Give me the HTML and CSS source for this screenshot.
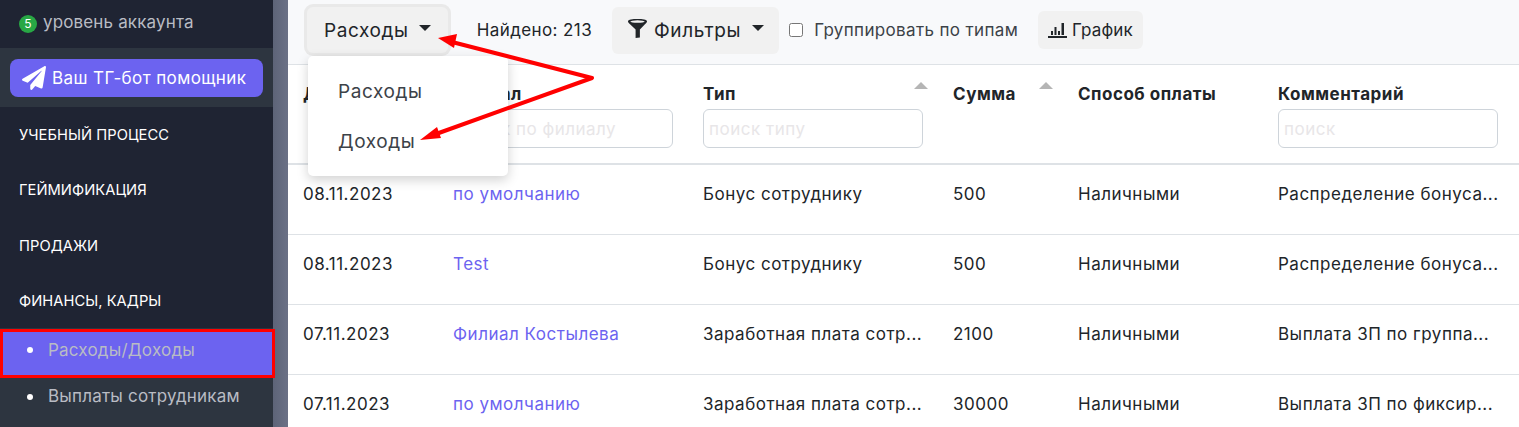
FILE: index.html
```html
<!DOCTYPE html>
<html lang="en">
<head>
    <meta charset="UTF-8">
    <meta name="viewport" content="width=device-width, initial-scale=1.0">
    <title>Расходы/Доходы</title>
    <link rel="stylesheet" href="styles.css">
</head>
<body>
    <div class="sidebar">
        <div class="level"><span class="level-badge">5</span> уровень аккаунта</div>
        <div class="bot-wrap">
            <a class="bot-button">
                <svg class="bot-icon" viewBox="0 0 512 512"><path fill="#fff" d="M476 3.2 12.5 270.6c-18.1 10.4-15.8 35.6 2.2 43.2L121 358.4l287.3-253.2c5.500-4.900 13.300 2.600 8.600 8.300L176 407v80.500c0 23.600 28.500 32.900 42.500 15.800L282 426l124.600 52.200c14.200 6 30.400-2.900 33-18.200l72-432C515 7.800 493.300-6.800 476 3.200z"/></svg>
                Ваш ТГ-бот помощник
            </a>
        </div>
        <ul class="menu">
            <li>Учебный процесс</li>
            <li>Геймификация</li>
            <li>Продажи</li>
            <li>Финансы, кадры</li>
        </ul>
        <ul class="submenu">
            <li class="active">Расходы/Доходы</li>
            <li>Выплаты сотрудникам</li>
        </ul>
    </div>
    <div class="scroll-strip"></div>

    <div class="main">
        <div class="toolbar">
            <button class="btn btn-focus">Расходы <span class="caret"></span></button>
            <span class="found">Найдено: 213</span>
            <button class="btn btn-filters">
                <svg class="funnel" viewBox="0 0 22 22"><path fill="#212529" d="M1 3.500C1 1.500 6 1 11 1s10 .5 10 2.500c0 1.200-1 2-2.200 3L13.500 12v8.500L9 21v-9L3.200 6.500C2 5.500 1 4.700 1 3.500z"/><ellipse cx="11" cy="3.700" rx="7.500" ry="1.300" fill="#f1f1f1"/></svg>
                Фильтры <span class="caret"></span>
            </button>
            <label class="group-check"><input type="checkbox"> Группировать по типам</label>
            <button class="btn btn-small">
                <svg class="chart" viewBox="0 0 19 15"><path fill="#212529" d="M0 13h19v2H0zM3 8h2v4H3zM6.500 4h2v8h-2zM10 8h2v4h-2zM13.500 0h2.500v12h-2.500z"/></svg>
                График
            </button>
        </div>

        <table class="data">
            <colgroup>
                <col class="c-date"><col class="c-branch"><col class="c-type">
                <col class="c-sum"><col class="c-pay"><col class="c-note">
            </colgroup>
            <thead>
                <tr>
                    <th>Дата</th>
                    <th>Филиал<input class="search" placeholder="поиск по филиалу"></th>
                    <th class="sortable">Тип<input class="search" placeholder="поиск типу"></th>
                    <th class="sortable">Сумма</th>
                    <th>Способ оплаты</th>
                    <th>Комментарий<input class="search" placeholder="поиск"></th>
                </tr>
            </thead>
            <tbody>
                <tr>
                    <td>08.11.2023</td><td><a>по умолчанию</a></td><td>Бонус сотруднику</td>
                    <td>500</td><td>Наличными</td><td>Распределение бонуса...</td>
                </tr>
                <tr>
                    <td>08.11.2023</td><td><a>Test</a></td><td>Бонус сотруднику</td>
                    <td>500</td><td>Наличными</td><td>Распределение бонуса...</td>
                </tr>
                <tr>
                    <td>07.11.2023</td><td><a>Филиал Костылева</a></td><td>Заработная плата сотр...</td>
                    <td>2100</td><td>Наличными</td><td>Выплата ЗП по группа...</td>
                </tr>
                <tr>
                    <td>07.11.2023</td><td><a>по умолчанию</a></td><td>Заработная плата сотр...</td>
                    <td>30000</td><td>Наличными</td><td>Выплата ЗП по фиксир...</td>
                </tr>
            </tbody>
        </table>

        <div class="dropdown">
            <div class="dropdown-item">Расходы</div>
            <div class="dropdown-item">Доходы</div>
        </div>
    </div>

    <!-- red annotation arrows drawn over the page -->
    <svg class="arrows" viewBox="0 0 1519 427">
        <path d="M452 42 592 78 436 134" fill="none" stroke="#f00" stroke-width="4" stroke-linejoin="round" stroke-linecap="round"/>
        <path fill="#f00" d="M438 38 457 34 454 48z"/>
        <path fill="#f00" d="M420 140 437 127 441 138z"/>
    </svg>
</body>
</html>
```

FILE: styles.css
```css
/* General */
* {
    box-sizing: border-box;
}

html, body {
    height: 100%;
}

body {
    margin: 0;
    display: flex;
    height: 427px;
    overflow: hidden;
    font-family: Inter, "Noto Sans", sans-serif;
    font-size: 17px;
    color: #212529;
    background-color: #fff;
}

/* Sidebar */
.sidebar {
    width: 273px;
    flex-shrink: 0;
    background-color: #1f2433;
    color: #fff;
}

.level {
    height: 48px;
    padding: 12px 0 0 19px;
    font-size: 17px;
    line-height: 20px;
    letter-spacing: 0.15px;
    color: #b9bcc4;
}

.level-badge {
    display: inline-block;
    width: 18px;
    height: 18px;
    margin-right: 1px;
    border-radius: 50%;
    background-color: #28a745;
    color: #fff;
    font-size: 12px;
    line-height: 18px;
    letter-spacing: 0;
    text-align: center;
    vertical-align: 0;
}

.bot-wrap {
    height: 59px;
    padding: 11px 10px 0;
    background-color: #2d3540;
}

.bot-button {
    display: flex;
    align-items: center;
    height: 38px;
    padding-left: 12px;
    border-radius: 8px;
    background-color: #6c63f0;
    color: #fff;
    font-size: 17px;
    letter-spacing: 0.4px;
}

.bot-icon {
    width: 24px;
    height: 24px;
    margin-right: 6px;
}

.menu {
    list-style: none;
    margin: 0;
    padding: 0;
}

.menu li {
    height: 55.3px;
    line-height: 57px;
    padding-left: 19px;
    font-size: 14.7px;
    letter-spacing: 0.05px;
    text-transform: uppercase;
}

.submenu {
    list-style: none;
    margin: 0;
    padding: 1px 0 0;
    background-color: #2d3540;
    height: 100px;
    color: #b9bcc4;
}

.submenu li {
    position: relative;
    height: 47px;
    line-height: 36px;
    padding-left: 48px;
    font-size: 17px;
    letter-spacing: 0.2px;
}

.submenu li::before {
    content: "";
    position: absolute;
    left: 27px;
    top: 16px;
    width: 6px;
    height: 6px;
    border-radius: 50%;
    background-color: #fff;
}

.submenu li.active {
    width: 275px;
    height: 49px;
    line-height: 36px;
    padding-left: 45px;
    border: 3px solid #f00;
    background-color: #6c63f0;
    z-index: 2;
}

.submenu li.active::before {
    left: 24px;
    top: 15px;
}

/* Grey scrollbar strip */
.scroll-strip {
    width: 15px;
    flex-shrink: 0;
    background: linear-gradient(to right, #5d6478, #6b7186);
}

/* Main area */
.main {
    position: relative;
    flex: 1;
    min-width: 0;
}

.toolbar {
    display: flex;
    align-items: center;
    height: 65px;
    padding: 0 0 4px 19px;
    background-color: #f8f9fb;
    border-bottom: 1px solid #dee2e6;
}

.btn {
    display: inline-flex;
    align-items: center;
    border: none;
    border-radius: 6px;
    background-color: #f1f1f1;
    color: #212529;
    font-family: inherit;
    font-size: 19px;
    letter-spacing: 0.6px;
}

.btn-focus {
    height: 46px;
    padding: 0 17px;
    box-shadow: 0 0 0 3px #e9e9e9;
}

.btn-focus .caret {
    margin-left: 10px;
}

.btn-filters {
    height: 47px;
    margin-left: 20px;
    padding: 0 15px;
}

.btn-small {
    height: 38px;
    margin-left: 20px;
    padding: 0 10px;
    font-size: 17px;
    letter-spacing: 0.1px;
}

.caret {
    display: inline-block;
    margin-left: 11px;
    margin-bottom: 4px;
    border-top: 6px solid #212529;
    border-left: 6px solid transparent;
    border-right: 6px solid transparent;
}

.found {
    margin-left: 29px;
    letter-spacing: 0.4px;
}

.funnel {
    width: 21px;
    height: 21px;
    margin-right: 6px;
    margin-bottom: 3px;
}

.chart {
    width: 19px;
    height: 15px;
    margin-right: 5px;
}

.group-check {
    display: flex;
    align-items: center;
    margin-left: 10px;
    letter-spacing: 0.35px;
    color: #3c4248;
}

.group-check input {
    width: 14px;
    height: 14px;
    margin: 0 11px 0 0;
}

/* Table */
.data {
    width: 1231px;
    table-layout: fixed;
    border-collapse: collapse;
    letter-spacing: 0.5px;
}

.c-date { width: 150px; }
.c-branch { width: 250px; }
.c-type { width: 250px; }
.c-sum { width: 125px; }
.c-pay { width: 200px; }
.c-note { width: 256px; }

.data th {
    position: relative;
    height: 99px;
    padding: 19px 0 0 15px;
    text-align: left;
    vertical-align: top;
    font-size: 17px;
    font-weight: 700;
    line-height: 20px;
    border-bottom: 2px solid #dee2e6;
}

.sortable::after {
    content: "";
    position: absolute;
    top: 17px;
    right: 10px;
    border-bottom: 7px solid #b5b5b5;
    border-left: 7px solid transparent;
    border-right: 7px solid transparent;
}

.search {
    display: block;
    width: 220px;
    height: 39px;
    margin-top: 5px;
    padding: 0 5px;
    border: 1px solid #ced4da;
    border-radius: 6px;
    font-family: inherit;
    font-size: 17px;
    letter-spacing: 0.5px;
}

.search::placeholder {
    color: #e8e6e8;
}

.data td {
    height: 70px;
    padding: 0 0 11px 15px;
    font-size: 17px;
    white-space: nowrap;
    border-bottom: 1px solid #dee2e6;
}

.data a {
    color: #6c63f0;
}

/* Dropdown opened over the table */
.dropdown {
    position: absolute;
    top: 56px;
    left: 20px;
    width: 200px;
    height: 120px;
    padding-top: 11px;
    border-radius: 5px;
    background-color: #fff;
    box-shadow: 0 4px 12px rgba(0, 0, 0, 0.18);
    font-size: 19px;
    letter-spacing: 0.6px;
    color: #3c4248;
}

.dropdown-item {
    height: 50px;
    line-height: 50px;
    padding-left: 30px;
}

.arrows {
    position: absolute;
    top: 0;
    left: 0;
    width: 1519px;
    height: 427px;
    pointer-events: none;
}
```
